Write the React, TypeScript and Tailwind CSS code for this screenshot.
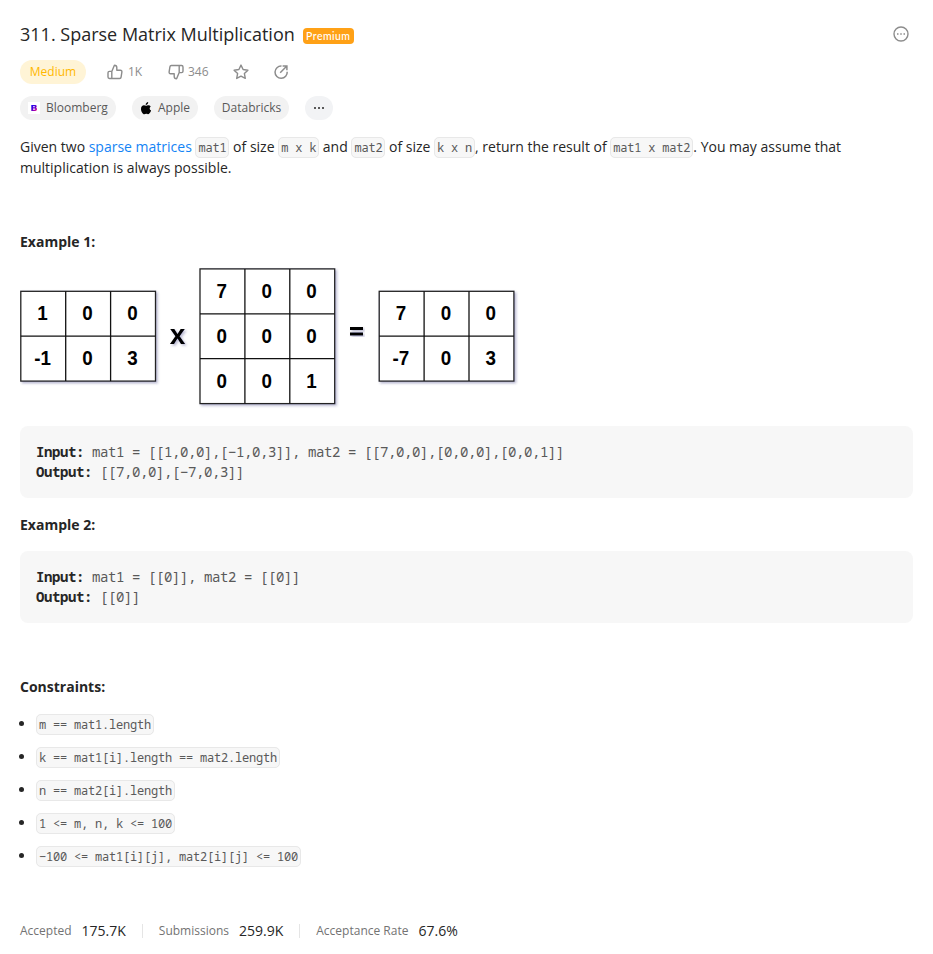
import React from "react";

const sans = "font-['Open_Sans','Noto_Sans',sans-serif]";
const mono = "font-['Noto_Sans_Mono','DejaVu_Sans_Mono',monospace]";

function Code({ children }: { children: React.ReactNode }) {
  return (
    <code
      className={`${mono} rounded-[5px] border border-[#e8e8e8] bg-[#f7f7f7] px-0.5 py-px text-[12px] leading-[18px] tracking-[-0.2px] whitespace-pre text-[#595959]`}
    >
      {children}
    </code>
  );
}

function Matrix({ x, y, rows }: { x: number; y: number; rows: string[][] }) {
  const s = 44.9;
  const w = rows[0].length * s;
  const h = rows.length * s;
  return (
    <g transform={`translate(${x} ${y})`}>
      <rect width={w} height={h} fill="#fff" stroke="#222" strokeWidth="1.3" filter="url(#shade)" />
      {rows[0].slice(1).map((_, i) => (
        <path key={i} d={`M${(i + 1) * s} 0V${h}`} stroke="#111" strokeWidth="1.3" />
      ))}
      {rows.slice(1).map((_, i) => (
        <path key={i} d={`M0 ${(i + 1) * s}H${w}`} stroke="#111" strokeWidth="1.3" />
      ))}
      {rows.map((r, j) =>
        r.map((v, i) => (
          <text
            key={`${i}-${j}`}
            transform={`translate(${(i + 0.5) * s - 0.7} ${(j + 0.5) * s + 6.7}) scale(.94 1)`}
            textAnchor="middle"
          >
            {v}
          </text>
        ))
      )}
    </g>
  );
}

function Block({ lines }: { lines: [string, string][] }) {
  return (
    <pre className={`${mono} h-[72px] rounded-lg bg-[#f7f7f7] px-4 py-4 text-[14px] leading-5 tracking-[-0.4px] text-[#595959]`}>
      {lines.map(([a, b]) => (
        <div key={a}>
          <b className="font-bold text-[#262626]">{a}</b> {b}
        </div>
      ))}
    </pre>
  );
}

const constraints = [
  "m == mat1.length",
  "k == mat1[i].length == mat2.length",
  "n == mat2[i].length",
  "1 <= m, n, k <= 100",
  "−100 <= mat1[i][j], mat2[i][j] <= 100",
];

function Thumb({ className }: { className: string }) {
  return (
    <svg className={className} width="16" height="16" viewBox="0 0 16 16" fill="none" stroke="#8c8c8c" strokeWidth="1.4" strokeLinejoin="round">
      <path d="M4.8 7.4 7.4 1.2c1.4 0 2.4 1 2.4 2.3v2.700h3.700c.9 0 1.500.8 1.400 1.600l-.8 5.400c-.1.800-.7 1.300-1.500 1.300H2.400c-.8 0-1.400-.6-1.400-1.400V8.800c0-.8.6-1.400 1.400-1.400h2.400Zm0 0v7" />
    </svg>
  );
}

export default function App() {
  return (
    <main className={`${sans} h-[954px] w-[933px] bg-white px-5 pt-[22px] text-[14px] leading-[21px] text-[#262626]`}>
      <header className="flex h-6 items-center justify-between">
        <div className="flex items-center">
          <h1 className="text-[18px] leading-6 whitespace-nowrap">311. Sparse Matrix Multiplication</h1>
          <span className="mt-1 ml-2 flex h-4 w-[51px] items-center justify-center rounded bg-[#ffa116] font-[family-name:Lato] text-[10.5px] leading-4 font-medium tracking-[0.45px] text-white">
            Premium
          </span>
        </div>
        <svg className="mr-1" width="16" height="16" viewBox="0 0 16 16" fill="none" stroke="#8c8c8c" strokeWidth="1.4">
          <circle cx="8" cy="8" r="7" />
          <path d="M4 8h1.5M7.25 8h1.5M10.5 8H12" strokeWidth="1.5" />
        </svg>
      </header>

      <div className="mt-3.5 flex h-6 items-center text-[12px] leading-4 text-[#8c8c8c]">
        <span className="flex h-6 w-[66px] items-center justify-center rounded-full bg-[#fff4d6] text-[#ffb800]">
          Medium
        </span>
        <Thumb className="ml-[21px]" />
        <span className="ml-[5px] w-[16px] whitespace-nowrap">1K</span>
        <Thumb className="ml-6 rotate-180" />
        <span className="ml-1 w-[21px]">346</span>
        <svg className="ml-6" width="16" height="16" viewBox="0 0 16 16" fill="none" stroke="#8c8c8c" strokeWidth="1.4" strokeLinejoin="round">
          <path d="m8 1.1 2.1 4.4 4.8.7-3.5 3.4.9 4.8L8 12.1l-4.3 2.3.9-4.8L1.1 6.2l4.8-.7L8 1.1Z" />
        </svg>
        <svg className="ml-6" width="16" height="16" viewBox="0 0 16 16" fill="none" stroke="#8c8c8c" strokeWidth="1.5">
          <path d="M8.5 2.1A6.1 6.1 0 1 0 14.2 7.7M7.2 8.8l6.400-6.500M9.600 1.900h4.300v4.300" />
        </svg>
      </div>

      <div className="mt-3 flex h-6 items-center gap-4 text-[12px] leading-4 text-[#595959]">
        <span className="flex h-6 w-24 items-center rounded-full bg-[#f2f2f2] pl-2">
          <svg width="12" height="12" viewBox="0 0 12 12">
            <defs>
              <linearGradient id="bloom" x2="1" y2="1">
                <stop stopColor="#1100f5" />
                <stop offset=".5" stopColor="#5c00cf" />
                <stop offset="1" stopColor="#ff007e" />
              </linearGradient>
            </defs>
            <rect width="12" height="12" fill="#fff" />
            <path fill="url(#bloom)" fillRule="evenodd" d="M3.3 3h3.9q1.5 0 1.5 1.4 0 .9-.7 1.3 1 .4 1 1.6Q9 9 7.2 9H3.3Zm1.7 1.2v1h1.5q.5 0 .5-.5t-.5-.5Zm0 2.2v1.3h1.7q.6 0 .6-.6t-.6-.7Z" />
          </svg>
          <span className="ml-1.5">Bloomberg</span>
        </span>
        <span className="flex h-6 w-[66px] items-center rounded-full bg-[#f2f2f2] pl-2">
          <svg width="12" height="13" viewBox="0 0 12 13" fill="#000">
            <path d="M8.2 0c.1 1.7-1.1 2.8-2.5 2.9C5.6 1.4 6.9.2 8.2 0ZM10.7 4.4C9.2 5.4 9.3 7.7 11.1 8.5c-.7 2-1.9 3.7-3.2 3.7-.7 0-1-.4-1.8-.4s-1.2.4-1.8.4C2.7 12.2 1 9.3 1 6.900c0-2.300 1.400-3.600 2.900-3.600.9 0 1.600.5 2.200.5s1.300-.6 2.500-.6c.8 0 1.600.4 2.100 1.200Z" />
          </svg>
          <span className="ml-1.5">Apple</span>
        </span>
        <span className="flex h-6 w-[75px] items-center justify-center rounded-full bg-[#f2f2f2]">Databricks</span>
        <span className="flex h-6 w-7 items-center justify-center gap-[2.5px] rounded-full bg-[#f2f3f5]">
          <i className="size-[1.5px] bg-[#595959]" />
          <i className="size-[1.5px] bg-[#595959]" />
          <i className="size-[1.5px] bg-[#595959]" />
        </span>
      </div>

      <p className="mt-4 h-[42px]">
        Given two <a className="text-[#1484f5]">sparse matrices</a> <Code>mat1</Code> of size <Code>m x k</Code> and <Code>mat2</Code> of size <Code>k x n</Code>, return the result of <Code>mat1 x mat2</Code>. You may assume that multiplication is always possible.
      </p>

      <h2 className="mt-[53px] font-bold">Example 1:</h2>
      <svg className="mt-[14px] block" width="500" height="144" viewBox="20 266 500 144" fontFamily="Liberation Sans, sans-serif" fontWeight="700" fontSize="20">
        <defs>
          <filter id="shade" x="-10%" y="-10%" width="125%" height="125%">
            <feDropShadow dx="1.6" dy="1.6" stdDeviation="1" floodColor="#33337a" floodOpacity=".35" />
          </filter>
        </defs>
        <Matrix x={20.8} y={291.3} rows={[["1", "0", "0"], ["-1", "0", "3"]]} />
        <text x="177.5" y="344" textAnchor="middle" fontSize="28" filter="url(#shade)">x</text>
        <Matrix x={200} y={268.9} rows={[["7", "0", "0"], ["0", "0", "0"], ["0", "0", "1"]]} />
        <g filter="url(#shade)">
          <path d="M350 327h13v3h-13zM350 332.5h13v3h-13z" />
        </g>
        <Matrix x={379.2} y={291.3} rows={[["7", "0", "0"], ["-7", "0", "3"]]} />
      </svg>

      <div className="mt-4">
        <Block lines={[["Input:", "mat1 = [[1,0,0],[−1,0,3]], mat2 = [[7,0,0],[0,0,0],[0,0,1]]"], ["Output:", "[[7,0,0],[−7,0,3]]"]]} />
      </div>
      <h2 className="mt-4 mb-4 font-bold">Example 2:</h2>
      <Block lines={[["Input:", "mat1 = [[0]], mat2 = [[0]]"], ["Output:", "[[0]]"]]} />

      <h2 className="mt-[53px] font-bold">Constraints:</h2>
      <ul className="mt-4 flex flex-col gap-3">
        {constraints.map((c) => (
          <li key={c} className="flex h-[21px]">
            <i className="mt-2 mr-3 -ml-px size-[5px] rounded-full bg-[#262626]" />
            <div className="h-[21px]">
              <Code>{c}</Code>
            </div>
          </li>
        ))}
      </ul>

      <footer className="mt-[54px] flex h-[21px] items-center whitespace-nowrap">
        <span className="text-[12px] text-[#737373]">Accepted</span>
        <span className="ml-2.5">175.7K</span>
        <i className="mx-4 h-3.5 w-px bg-[#e5e5e5]" />
        <span className="text-[12px] text-[#737373]">Submissions</span>
        <span className="ml-2.5">259.9K</span>
        <i className="mx-4 h-3.5 w-px bg-[#e5e5e5]" />
        <span className="text-[12px] text-[#737373]">Acceptance Rate</span>
        <span className="ml-2.5">67.6%</span>
      </footer>
    </main>
  );
}
